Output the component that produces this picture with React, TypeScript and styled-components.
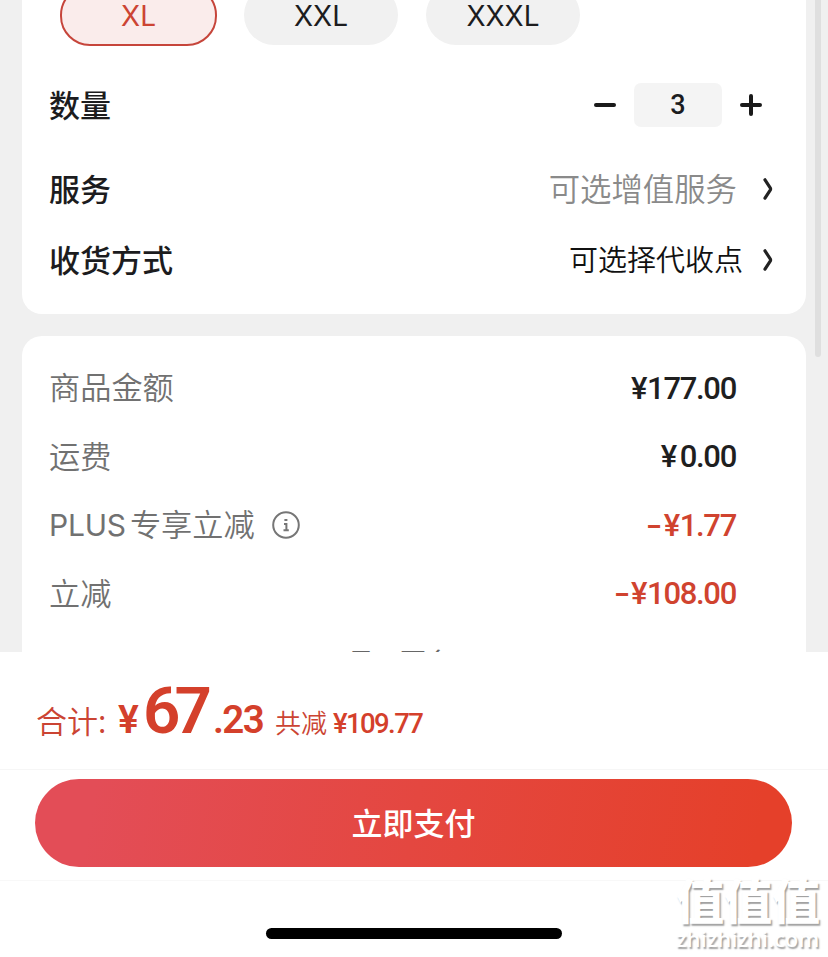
import React from "react";
import styled, { createGlobalStyle, css } from "styled-components";

const Global = createGlobalStyle`
  * { box-sizing: border-box; }
  body {
    margin: 0;
    background: #fff;
    font-family: "Noto Sans CJK SC", sans-serif;
    color: #1c1c1e;
  }
  button { font: inherit; color: inherit; border: 0; background: none; padding: 0; }
`;

const Screen = styled.div`
  position: relative;
  width: 828px;
  height: 957px;
  overflow: hidden;
  display: flex;
  flex-direction: column;
`;

const ScrollArea = styled.main`
  position: relative;
  height: 652px;
  flex: none;
  overflow: hidden;
  background: #f0f0f0;
  padding: 0 22px;
  display: flex;
  flex-direction: column;
  gap: 22px;
`;

const ScrollThumb = styled.div`
  position: absolute;
  top: -10px;
  right: 7px;
  width: 6px;
  height: 367px;
  border-radius: 3px;
  background: #dfdfdf;
`;

const OptionsCard = styled.section`
  flex: none;
  height: 314px;
  background: #fff;
  border-radius: 0 0 20px 20px;
  padding: 0 27px;
`;

const AmountCard = styled.section`
  flex: none;
  height: 420px;
  background: #fff;
  border-radius: 20px 20px 0 0;
  padding: 18px 27px 0;
`;

const Chips = styled.div`
  display: flex;
  gap: 28px;
  margin: -15px 0 0 11px;
`;

const Chip = styled.button<{ $selected?: boolean }>`
  width: 154px;
  height: 60px;
  border-radius: 30px;
  background: #f1f1f1;
  font: 400 28px/60px Inter, sans-serif;
  padding-top: 1px;
  ${(p) =>
    p.$selected &&
    css`
      width: 157px;
      height: 61px;
      background: #faeceb;
      color: #cc4433;
      border: 2px solid #c6453b;
      line-height: 57px;
      margin-right: -1px;
    `}
`;

const OptionRow = styled.div<{ $height: number }>`
  display: flex;
  align-items: center;
  height: ${(p) => p.$height}px;
`;

const OptionLabel = styled.span`
  flex: 1;
  font-size: 31px;
  line-height: 40px;
  font-weight: 500;
  padding-bottom: 3px;
`;

const OptionValue = styled.span<{ $muted?: boolean }>`
  font-size: ${(p) => (p.$muted ? 31.4 : 29)}px;
  line-height: 40px;
  font-weight: 350;
  padding-bottom: ${(p) => (p.$muted ? 3 : 5)}px;
  color: ${(p) => (p.$muted ? "#8a8a8a" : "#111")};
  margin-right: ${(p) => (p.$muted ? 26 : 20)}px;
`;

const Arrow = styled.svg`
  width: 10px;
  height: 24px;
  margin-right: 6px;
`;

const Stepper = styled.div`
  display: flex;
  align-items: center;
  gap: 18px;
  margin-right: 17px;
`;

const StepIcon = styled.svg`
  display: block;
  width: 22px;
  height: 22px;
`;

const Quantity = styled.span`
  width: 88px;
  height: 44px;
  border-radius: 7px;
  background: #f4f4f4;
  text-align: center;
  font: 500 27px/45px Roboto, sans-serif;
`;

const AmountRow = styled.div`
  display: flex;
  align-items: center;
  height: 68.5px;
`;

const AmountLabel = styled.span`
  display: flex;
  align-items: center;
  flex: 1;
  font-size: 31.2px;
  line-height: 40px;
  font-weight: 350;
  color: #717171;
`;

const LabelText = styled.span`
  padding-bottom: 4px;
`;

const Latin = styled.span`
  font-family: Inter, sans-serif;
  font-size: 30px;
  font-weight: 400;
  letter-spacing: -0.2px;
  margin-right: 4px;
`;

const InfoIcon = styled.svg`
  width: 28px;
  height: 28px;
  margin-left: 17px;
`;

const Amount = styled.span<{ $discount?: boolean }>`
  display: flex;
  font: 500 31px/40px Roboto, sans-serif;
  letter-spacing: -1.3px;
  padding-top: 1px;
  margin-right: 43px;
  color: ${(p) => (p.$discount ? "#d0432f" : "#1f1f1f")};
`;

const Minus = styled.span`
  letter-spacing: 0;
  margin-right: 4px;
  transform: scaleX(1.5);
`;

const Yen = styled.span<{ $tight: boolean }>`
  width: ${(p) => (p.$tight ? 16 : 19)}px;
`;

const ShowMore = styled.div`
  margin-top: 14px;
  padding-left: 299px;
  font-size: 26px;
  line-height: 38px;
  color: #666;
`;

const Footer = styled.footer`
  flex: 1;
  background: #fff;
  display: flex;
  flex-direction: column;
  align-items: center;
`;

const TotalRow = styled.div`
  align-self: stretch;
  height: 118px;
  padding: 19px 0 0 36px;
  border-bottom: 1px solid #f6f6f6;
  display: flex;
  align-items: baseline;
  color: #d4402b;
  line-height: 80px;
  white-space: pre;
`;

const TotalLabel = styled.span`
  font-size: 31px;
  font-weight: 350;
  color: #cb4433;
  width: 82px;
`;

const Price = styled.span<{ $size: number; $width: number; $spacing?: number; $weight?: number }>`
  font-family: Roboto, sans-serif;
  font-weight: ${(p) => p.$weight ?? 600};
  font-size: ${(p) => p.$size}px;
  width: ${(p) => p.$width}px;
  letter-spacing: ${(p) => p.$spacing ?? 0}px;
`;

const SavingLabel = styled.span`
  font-size: 26px;
  font-weight: 350;
  width: 58px;
  color: #cb4433;
`;

const PayBar = styled.div`
  align-self: stretch;
  height: 111px;
  padding: 9px 35px 0;
  border-bottom: 1px solid #f8f8f8;
`;

const PayButton = styled.button`
  display: block;
  width: 757px;
  height: 88px;
  border-radius: 44px;
  background: linear-gradient(100deg, #e34d57 8%, #e44740 50%, #e5402a 95%);
  color: #fff;
  font-size: 31px;
  font-weight: 500;
  line-height: 85px;
  padding-bottom: 3px;
`;

const HomeIndicator = styled.div`
  width: 296px;
  height: 11px;
  border-radius: 6px;
  margin-top: 47px;
  background: #000;
`;

const Watermark = styled.div`
  position: absolute;
  left: 676px;
  top: 871px;
  width: 152px;
  color: #fff;
  text-shadow: 1.5px 1.5px 1.5px #a0a0a0;
`;

const WatermarkName = styled.div`
  font-size: 48px;
  line-height: 54px;
  font-weight: 900;
  white-space: nowrap;
`;

const WatermarkSite = styled.div`
  font: 600 22px/26px "Open Sans", sans-serif;
  white-space: nowrap;
`;

function Chevron() {
  return (
    <Arrow viewBox="0 0 10 24" fill="none" stroke="#222" strokeWidth="3.2" strokeLinecap="round" strokeLinejoin="round">
      <path d="M2 2.8L7.4 11.2Q7.8 12 7.4 12.8L2 21.2" />
    </Arrow>
  );
}

const amounts = [
  { label: "商品金额", value: "177.00" },
  { label: "运费", value: "0.00" },
  { latin: "PLUS", label: "专享立减", value: "1.77", info: true, discount: true },
  { label: "立减", value: "108.00", discount: true },
];

export default function App() {
  return (
    <>
      <Global />
      <Screen>
        <ScrollArea>
          <OptionsCard>
            <Chips>
              <Chip $selected>XL</Chip>
              <Chip>XXL</Chip>
              <Chip>XXXL</Chip>
            </Chips>
            <OptionRow $height={118}>
              <OptionLabel>数量</OptionLabel>
              <Stepper>
                <StepIcon viewBox="0 0 22 22" stroke="#1a1a1a" strokeWidth="4" strokeLinecap="round">
                  <path d="M2 11H20" />
                </StepIcon>
                <Quantity>3</Quantity>
                <StepIcon viewBox="0 0 22 22" stroke="#1a1a1a" strokeWidth="4" strokeLinecap="round">
                  <path d="M2 11H20M11 2V20" />
                </StepIcon>
              </Stepper>
            </OptionRow>
            <OptionRow $height={50}>
              <OptionLabel>服务</OptionLabel>
              <OptionValue $muted>可选增值服务</OptionValue>
              <Chevron />
            </OptionRow>
            <OptionRow $height={92}>
              <OptionLabel>收货方式</OptionLabel>
              <OptionValue>可选择代收点</OptionValue>
              <Chevron />
            </OptionRow>
          </OptionsCard>
          <AmountCard>
            {amounts.map((a) => (
              <AmountRow key={a.label}>
                <AmountLabel>
                  {a.latin && <Latin>{a.latin}</Latin>}
                  <LabelText>{a.label}</LabelText>
                  {a.info && (
                    <InfoIcon viewBox="0 0 28 28" fill="none" stroke="#767676" strokeWidth="2">
                      <circle cx="14" cy="14" r="12.8" />
                      <path d="M12.4 9H15.4M12 13H14.4V19M11.5 19.3H16.8" />
                    </InfoIcon>
                  )}
                </AmountLabel>
                <Amount $discount={a.discount}>
                  {a.discount && <Minus>-</Minus>}
                  <Yen $tight={a.value.startsWith("1")}>¥</Yen>
                  {a.value}
                </Amount>
              </AmountRow>
            ))}
            <ShowMore>显示更多</ShowMore>
          </AmountCard>
          <ScrollThumb />
        </ScrollArea>
        <Footer>
          <TotalRow>
            <TotalLabel>合计:</TotalLabel>
            <Price $size={39} $width={25}>¥</Price>
            <Price $size={65.5} $width={70} $spacing={-6}>67</Price>
            <Price $size={38.5} $width={62} $spacing={-1.6}>.23</Price>
            <SavingLabel>共减</SavingLabel>
            <Price $size={27.5} $width={100} $spacing={-1.6} $weight={500}>¥109.77</Price>
          </TotalRow>
          <PayBar>
            <PayButton>立即支付</PayButton>
          </PayBar>
          <HomeIndicator />
        </Footer>
        <Watermark>
          <WatermarkName>值值值</WatermarkName>
          <WatermarkSite>zhizhizhi.com</WatermarkSite>
        </Watermark>
      </Screen>
    </>
  );
}
